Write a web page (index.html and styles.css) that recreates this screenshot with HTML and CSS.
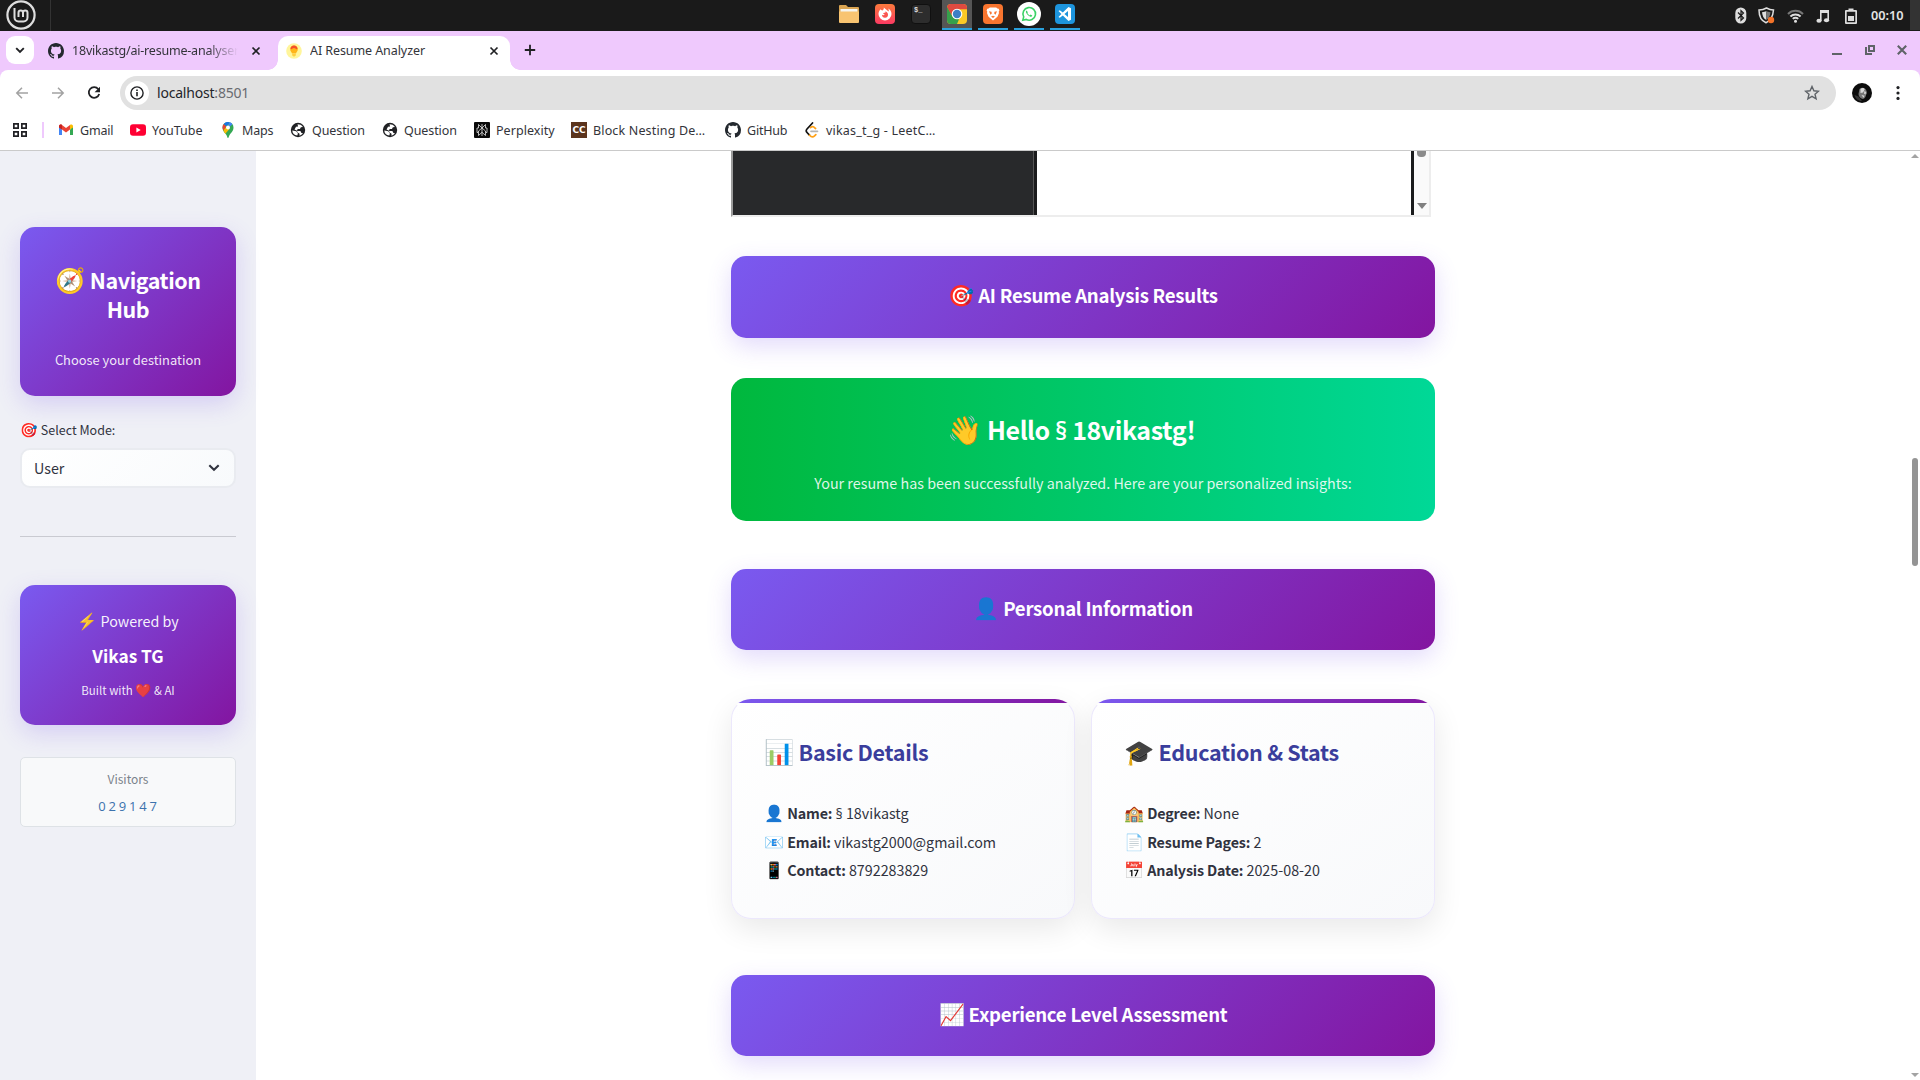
FILE: index.html
```html
<!DOCTYPE html>
<html lang="en">
<head>
<meta charset="utf-8">
<title>AI Resume Analyzer</title>
<link rel="stylesheet" href="styles.css">
</head>
<body>
<svg class="defs" width="0" height="0">
  <symbol id="github" viewBox="0 0 16 16"><path fill="#24292f" d="M8 0C3.58 0 0 3.58 0 8c0 3.54 2.29 6.53 5.47 7.59.4.07.55-.17.55-.38 0-.19-.01-.82-.01-1.49-2.01.37-2.53-.49-2.69-.94-.09-.23-.48-.94-.82-1.13-.28-.15-.68-.52-.01-.53.63-.01 1.08.58 1.23.82.72 1.21 1.87.87 2.33.66.07-.52.28-.87.51-1.07-1.78-.2-3.64-.89-3.64-3.95 0-.87.31-1.59.82-2.15-.08-.2-.36-1.02.08-2.12 0 0 .67-.21 2.2.82.64-.18 1.32-.27 2-.27.68 0 1.36.09 2 .27 1.53-1.04 2.2-.82 2.2-.82.44 1.1.16 1.92.08 2.12.51.56.82 1.27.82 2.15 0 3.07-1.87 3.75-3.65 3.95.29.25.54.73.54 1.48 0 1.07-.01 1.93-.01 2.2 0 .21.15.46.55.38A8.013 8.013 0 0016 8c0-4.42-3.58-8-8-8z"/></symbol>
  <symbol id="cross" viewBox="0 0 10 10"><path d="M1.5 1.5l7 7M8.5 1.5l-7 7" stroke="#202124" stroke-width="1.7" fill="none"/></symbol>
  <symbol id="globe" viewBox="0 0 16 16"><circle cx="8" cy="8" r="7.2" fill="#202124"/><path fill="#fff" d="M2.3 8.6l4 .7 1.600 2.100-.6 2.200C4.200 13.300 2.400 11.300 2.300 8.600zM7.500 2.300l3 .4c1 .5 1.900 1.300 2.400 2.300l-2 .2-1 1.700-2.300.2-.6 1.700 3.400.2 1 2 1.500.1c-.9 1.400-2 2.200-3.400 2.600l0-2-2.200-1.500-.2-1.500-2.600-1.200 1.500-2.800 2.100-.2z"/></symbol>
</svg>

<div class="panel">
  <div class="panel-menu">
    <svg width="30" height="30" viewBox="0 0 30 30" fill="none" stroke="#dedede"><circle cx="15" cy="15" r="13.600" stroke-width="2.200"/><path d="M8.500 8v9.500a4 4 0 0 0 4 4h5a4 4 0 0 0 4-4v-4.700a2.200 2.200 0 0 0-4.500 0v4.200m0-4.200a2.200 2.200 0 0 0-4.500 0v4.200" stroke-width="2"/></svg>
  </div>
  <div class="launchers">
    <div class="app"><svg width="20" height="20" viewBox="0 0 20 20"><path d="M0 3V2a1 1 0 0 1 1-1h6l2 2h10a1 1 0 0 1 1 1v5H0z" fill="#d9a452"/><path d="M1.500 5h17v5h-17z" fill="#f5f5f0"/><path d="M0 7.500h20v10.500a1 1 0 0 1-1 1H1a1 1 0 0 1-1-1z" fill="#f8c471"/></svg></div>
    <div class="app"><svg width="20" height="20" viewBox="0 0 20 20"><defs><linearGradient id="ff" x2="0" y2="1"><stop stop-color="#fb7a3c"/><stop offset="1" stop-color="#fb3a63"/></linearGradient></defs><rect width="20" height="20" rx="4" fill="url(#ff)"/><path d="M8.800 3.400c.2 1.600-.3 2.300-1.500 3.100C6.500 6.500 6 6 5.700 5.300 4.200 6.500 3.500 8.200 3.500 10a6.500 6.500 0 0 0 13 0c0-2.500-1.200-4.400-3.300-5.600.7 1.500.7 2.300.4 3.200-1-1.500-3-2.200-4.800-4.200z" fill="#fff"/><path d="M10.500 7.200c1.700.8 2.500 2 2.500 3.300a3 3 0 0 1-6 .3c.9.6 1.900.5 2.800-.2-1-.2-1.700-.7-1.500-1.500.5-.4 1.200-.3 1.900-.4.400-.4.400-1 .3-1.500z" fill="#fb5650"/></svg></div>
    <div class="app"><div class="terminal">$_</div></div>
    <div class="app open active"><svg width="20" height="20" viewBox="0 0 20 20"><defs><clipPath id="cc"><rect width="20" height="20" rx="4"/></clipPath></defs><g clip-path="url(#cc)"><rect width="20" height="20" fill="#fbc926"/><path d="M0 2l5.500 10.500 4.500 2.500 2 .2L10 20H0z" fill="#36a04b"/><path d="M0 0h20v5.200H10L5.500 12.500 0 3z" fill="#df4a40"/></g><circle cx="10" cy="10" r="5.300" fill="#fff"/><circle cx="10" cy="10" r="4.200" fill="#3c7fc6"/></svg></div>
    <div class="app open"><svg width="20" height="20" viewBox="0 0 20 20"><rect width="20" height="20" rx="4" fill="#f8752f"/><path d="M6.800 3.500h6.400l1.200 1.100 1.300.1.700 1.700-.7 1.300.3 1.300-1.400 3.500-1.600 1.500-3 2.600-3-2.600-1.600-1.500L4 9l.3-1.300-.7-1.300.7-1.700 1.300-.1z" fill="#fff"/><path d="M6 7.200l2.500.5.300 1.700-1.300 1.300zM14 7.200l-2.500.5-.3 1.700 1.300 1.300zM8 12.600l2-.8 2 .8-2 1.300z" fill="#f8752f"/></svg></div>
    <div class="app open"><svg width="24" height="24" viewBox="0 0 24 24"><circle cx="12" cy="12" r="12" fill="#fff"/><path d="M5.800 18.200l.9-3.300A6.300 6.300 0 1 1 9.200 17.400z" fill="none" stroke="#3bd266" stroke-width="1.600"/><path d="M9.600 8.600c-.8.600-.9 1.500-.3 2.500 1 1.900 2.300 3 4 3.600 1 .2 1.700-.3 2-1.200l-1.800-1-.8.900c-1.100-.5-1.900-1.300-2.400-2.300l.6-.8z" fill="#3bd266"/></svg></div>
    <div class="app open"><svg width="20" height="20" viewBox="0 0 20 20"><rect width="20" height="20" rx="4" fill="#1d94dc"/><path d="M13.500 3l2.500 1.200v11.600L13.500 17 7.800 11.500 4.800 13.800l-1.300-.8L6.400 10 3.500 7l1.300-.8 3 2.300zM13 6.900L9.400 10l3.600 3.100z" fill="#fff"/></svg></div>
  </div>
  <div class="tray">
    <svg width="12" height="17" viewBox="0 0 12 17"><rect x=".3" y=".5" width="11" height="16" rx="5.500" fill="#dedede"/><path d="M3 5.500l5.500 5.500L6 13.300V3.700L8.500 6 3 11.500" fill="none" stroke="#1a1a1a" stroke-width="1.200"/></svg>
    <svg width="17" height="17" viewBox="0 0 17 17"><path d="M8.500 1C6.500 2.200 4 3 1 3c0 6 1.500 10.500 7 12.800C13.500 13.500 15 9 15.500 3c-3 0-5-.8-7-2z" fill="none" stroke="#dedede" stroke-width="1.500"/><path d="M8.300 4v9C5.500 11.500 4.500 9 4 5.300 6 5 7 4.800 8.300 4z" fill="#dedede"/><path d="M8.300 4v9c2.700-1.500 3.700-4 4.200-7.700-2-.3-3-.5-4.200-1.300z" fill="#777"/><circle cx="13" cy="13" r="3.200" fill="#f37329"/></svg>
    <svg width="17" height="14" viewBox="0 0 17 14" fill="none"><path d="M1 5a10.500 10.500 0 0 1 15 0" stroke="#777" stroke-width="2"/><path d="M3.400 7.500a7.200 7.200 0 0 1 10.200 0M5.800 9.900a3.900 3.900 0 0 1 5.400 0" stroke="#dedede" stroke-width="2"/><circle cx="8.500" cy="12.200" r="1.500" fill="#dedede"/></svg>
    <svg width="14" height="14" viewBox="0 0 14 14"><path d="M4 1h9v10h-1.600V4H5.600v8H4z" fill="#dedede"/><ellipse cx="3" cy="11.800" rx="2.600" ry="2" fill="#dedede"/><ellipse cx="10.500" cy="11.200" rx="2.600" ry="2" fill="#dedede"/></svg>
    <svg width="12" height="16" viewBox="0 0 12 16"><path d="M3.500.5h5V2H11a1 1 0 0 1 1 1v12a1 1 0 0 1-1 1H1a1 1 0 0 1-1-1V3a1 1 0 0 1 1-1h2.500zM1.700 3.700v10.600h8.600V3.700z" fill="#dedede" fill-rule="evenodd"/><path d="M3 8h6v5H3z" fill="#dedede"/></svg>
    <span class="clock">00:10</span>
  </div>
  <div class="panel-corner"></div>
</div>

<div class="tabstrip">
  <div class="tab-search"><svg width="10" height="7" viewBox="0 0 10 7"><path d="M1.200 1.200L5 5l3.800-3.800" fill="none" stroke="#202124" stroke-width="1.900"/></svg></div>
  <div class="tab idle"><svg width="16" height="16"><use href="#github"/></svg><span class="tab-title faded">18vikastg/ai-resume-analyser</span><svg class="tab-close" width="10" height="10"><use href="#cross"/></svg></div>
  <div class="tab current"><svg width="16" height="16" viewBox="0 0 16 16"><circle cx="8" cy="8" r="7.800" fill="#fff59b"/><path d="M8 2.500a3.800 3.800 0 0 0-3.800 3.800C4.200 8.500 5.600 9 6 10.500h4c.4-1.500 1.800-2 1.800-4.200A3.800 3.800 0 0 0 8 2.500z" fill="#ffb418"/><path d="M8 2.500c-2 0-3.300 1.300-3.500 3.300 1.300 1.200 2-.8 3.500-.8s2.200 2 3.500.8C11.300 3.800 10 2.500 8 2.500z" fill="#f4502b"/><path d="M6.200 11h3.600v1.500L8 13.800l-1.800-1.300z" fill="#ffcf3f"/></svg><span class="tab-title">AI Resume Analyzer</span><svg class="tab-close" width="10" height="10"><use href="#cross"/></svg></div>
  <svg class="new-tab" width="12" height="12" viewBox="0 0 12 12"><path d="M6 .8v10.400M.8 6h10.400" stroke="#202124" stroke-width="1.800"/></svg>
  <div class="window-buttons">
    <svg width="10" height="10" viewBox="0 0 10 10"><path d="M0 8h10v2H0z" fill="#5f6368"/></svg>
    <svg width="10" height="10" viewBox="0 0 10 10" fill="none" stroke="#5f6368" stroke-width="2"><path d="M4 1h5v5H4zM1 2v7h6"/></svg>
    <svg width="10" height="10" viewBox="0 0 10 10"><path d="M.8.800l8.400 8.400M9.200.8L.8 9.200" stroke="#5f6368" stroke-width="2.100"/></svg>
  </div>
</div>

<div class="toolbar-wrap">
<div class="toolbar">
  <svg class="nav" width="14" height="12" viewBox="0 0 14 12" fill="none" stroke="#a2a2a2" stroke-width="1.500"><path d="M7 .8L1.800 6 7 11.200M2 6h11"/></svg>
  <svg class="nav" width="14" height="12" viewBox="0 0 14 12" fill="none" stroke="#a2a2a2" stroke-width="1.500"><path d="M7 .8L12.200 6 7 11.200M12 6H1"/></svg>
  <svg class="nav" width="14" height="14" viewBox="0 0 14 14"><path d="M11.300 3.200A5.300 5.300 0 1 0 12.200 8" fill="none" stroke="#202124" stroke-width="1.800"/><path d="M13 .8v5.400H7.600z" fill="#202124"/></svg>
  <div class="omnibox">
    <div class="info"><svg width="14" height="14" viewBox="0 0 14 14"><circle cx="7" cy="7" r="6.100" fill="none" stroke="#202124" stroke-width="1.400"/><path d="M6.200 6h1.600v4.300H6.200zM6.200 3.500h1.600v1.500H6.200z" fill="#202124"/></svg></div>
    <span class="url">localhost<span class="port">:8501</span></span>
    <svg class="star" width="16" height="16" viewBox="0 0 16 16"><path d="M8 1.500l1.900 4.300 4.600.4-3.500 3 1.100 4.600L8 11.400l-4.100 2.400L5 9.200l-3.500-3 4.600-.4z" fill="none" stroke="#5f6368" stroke-width="1.400"/></svg>
  </div>
  <svg class="avatar" width="20" height="20" viewBox="0 0 20 20"><circle cx="10" cy="10" r="10" fill="#0c0c0c"/><path d="M7.500 6c2.500-2.500 6.500-1.500 7.200 2.500.5 1.500 0 2.500-.5 3.100-.3 2-1.500 4.200-3.400 4.400C8 15.500 6.500 13 6.500 11z" fill="#777"/><path d="M8.500 6c1.500-1.500 4-1.200 4.200.6L11 9.500 8.500 10zM12.500 8l1.500 1-.5 2.500-1.500-1zM9.500 12l3 .8-1 2z" fill="#d8d8d8"/><path d="M2.500 12l4 1.500 3.500 4.500c-3.500.3-6.500-2-7.500-6z" fill="#333"/></svg>
  <svg class="kebab" width="4" height="14" viewBox="0 0 4 14" fill="#202124"><circle cx="2" cy="1.600" r="1.600"/><circle cx="2" cy="7" r="1.600"/><circle cx="2" cy="12.400" r="1.600"/></svg>
</div>
</div>

<div class="bookmarks">
  <svg class="apps-grid" width="14" height="14" viewBox="0 0 14 14" fill="none" stroke="#202124" stroke-width="1.700"><path d="M.85.850h4.300v4.300H.85zM8.850.850h4.300v4.300h-4.300zM.85 8.850h4.300v4.300H.85zM8.850 8.850h4.300v4.300h-4.300z"/></svg>
  <div class="divider"></div>
  <div class="bm gmail"><svg width="16" height="16" viewBox="0 0 16 16"><path d="M1 3.500V13h3V7.500z" fill="#4285f4"/><path d="M15 3.500V13h-3V7.500z" fill="#34a853"/><path d="M1 4.500C1 2.500 3 2 4 3l4 3 4-3v4.500L8 10.500 4 7.500 1 5.500z" fill="#ea4335"/><path d="M12 3c1-1 3-.5 3 1.500v1L12 7.500z" fill="#fbbc04"/><path d="M1 4.500C1 2.500 3 2 4 3v4.500l-3-2z" fill="#c5221f"/></svg><span>Gmail</span></div>
  <div class="bm youtube"><svg width="16" height="16" viewBox="0 0 16 16"><rect y="2.200" width="16" height="11.600" rx="3" fill="#f03"/><path d="M6.400 5.500v5l4.300-2.500z" fill="#fff"/></svg><span>YouTube</span></div>
  <div class="bm maps"><svg width="16" height="16" viewBox="0 0 16 16"><path d="M8 16c-.8 0-.7-1.400-1.600-2.900C5.300 11.200 2.500 9 2.500 5.500A5.500 5.500 0 0 1 8 0a5.500 5.500 0 0 1 5.500 5.500c0 3.500-2.800 5.700-3.900 7.600C8.700 14.600 8.800 16 8 16z" fill="#34a853"/><path d="M3.800 2L6.300 4.200 3.600 8.500A5.500 5.500 0 0 1 3.800 2z" fill="#ea4335"/><path d="M3.500 8.300L6.400 4.800l3.200 2-4.300 4.900C4.500 10.700 3.800 9.600 3.500 8.300z" fill="#fbbc04"/><path d="M3.800 2A5.500 5.500 0 0 1 9.700.300L6.400 4.200z" fill="#1a73e8"/><path d="M9.700.3c1.300.4 2 1 2.700 1.900L9.500 5 8 3z" fill="#4285f4"/><circle cx="8" cy="5.500" r="2" fill="#fff"/></svg><span>Maps</span></div>
  <div class="bm question"><svg width="16" height="16"><use href="#globe"/></svg><span>Question</span></div>
  <div class="bm question"><svg width="16" height="16"><use href="#globe"/></svg><span>Question</span></div>
  <div class="bm perplexity"><svg width="16" height="16" viewBox="0 0 16 16"><rect width="16" height="16" rx="1" fill="#0a0a0a"/><path d="M8 2v12M4.500 2.500L8 6l3.500-3.500V6h1.500v4.500h-1.500v3L8 10.300l-3.500 3.200v-3H3V6h1.500zM4.500 10.500V9L8 6l3.500 3v1.500" fill="none" stroke="#e4e4e4" stroke-width=".8"/></svg><span>Perplexity</span></div>
  <div class="bm chef"><div class="cc">CC</div><span>Block Nesting De…</span></div>
  <div class="bm gh"><svg width="16" height="16"><use href="#github"/></svg><span>GitHub</span></div>
  <div class="bm leet"><svg width="16" height="16" viewBox="0 0 16 16" fill="none" stroke-width="1.700" stroke-linecap="round"><path d="M6.500 5.700c1.600-1.500 3-1.300 4.300.1l.8.700" stroke="#ffa116"/><path d="M8.500 1L3 7c-1 1.100-1 2.400 0 3.500l2.500 2.700" stroke="#111"/><path d="M5.500 13.200c1.800 2 3.600 2 5.100.7l1.200-1.200" stroke="#ffa116"/><path d="M7 9.300h6.500" stroke="#b3b3b3"/></svg><span>vikas_t_g - LeetC…</span></div>
</div>

<div class="page">
  <aside class="sidebar">
    <div class="brand-card hub">
      <h2><span class="em">🧭</span> Navigation<br>Hub</h2>
      <p>Choose your destination</p>
    </div>
    <div class="select-label"><span class="em">🎯</span> Select Mode:</div>
    <div class="select"><span>User</span><svg width="12" height="8" viewBox="0 0 12 8"><path d="M1.300 1.300L6 5.800l4.700-4.500" fill="none" stroke="#31333f" stroke-width="2.100"/></svg></div>
    <div class="rule"></div>
    <div class="brand-card powered">
      <div class="by"><span class="em">⚡</span> Powered by</div>
      <div class="who">Vikas TG</div>
      <div class="built">Built with <span class="em">❤️</span> &amp; AI</div>
    </div>
    <div class="visitors"><div class="v-label">Visitors</div><div class="v-count">029147</div></div>
  </aside>

  <main class="main">
    <div class="content">
      <div class="pdf">
        <div class="pdf-dark"></div>
        <div class="pdf-edge"></div>
        <div class="pdf-page"></div>
        <div class="pdf-scroll"><div class="pdf-thumb"></div><div class="pdf-down"></div></div>
      </div>
      <div class="banner results"><h3><span class="em">🎯</span> AI Resume Analysis Results</h3></div>
      <div class="hello">
        <h2><span class="em">👋</span> Hello <span class="sect">§</span> 18vikastg!</h2>
        <p>Your resume has been successfully analyzed. Here are your personalized insights:</p>
      </div>
      <div class="banner personal"><h3><span class="em">👤</span> Personal Information</h3></div>
      <div class="cards">
        <section class="card">
          <h3><span class="em">📊</span> Basic Details</h3>
          <p><span class="em">👤</span> <b>Name:</b> <span class="sect">§</span> 18vikastg</p>
          <p><span class="em">📧</span> <b>Email:</b> vikastg2000@gmail.com</p>
          <p><span class="em">📱</span> <b>Contact:</b> 8792283829</p>
        </section>
        <section class="card">
          <h3><span class="em">🎓</span> Education &amp; Stats</h3>
          <p><span class="em">🏫</span> <b>Degree:</b> None</p>
          <p><span class="em">📄</span> <b>Resume Pages:</b> 2</p>
          <p><span class="em">📅</span> <b>Analysis Date:</b> 2025-08-20</p>
        </section>
      </div>
      <div class="banner level"><h3><span class="em">📈</span> Experience Level Assessment</h3></div>
    </div>
    <div class="scrollbar"><div class="sb-up"></div><div class="sb-thumb"></div><div class="sb-down"></div></div>
  </main>
</div>
</body>
</html>
```
FILE: styles.css
```css
* { box-sizing: border-box; }
body {
  margin: 0;
  width: 1920px;
  height: 1080px;
  overflow: hidden;
  display: flex;
  flex-direction: column;
  background: #fff;
  font-family: "Noto Sans", sans-serif;
  color: #31333f;
}
svg { display: block; flex: none; }
.defs { position: absolute; }
h2, h3, p { margin: 0; }
.em { font-size: 1.13em; line-height: 0; letter-spacing: 0; font-weight: 400; }
.sect { font-family: "Open Sans", sans-serif; font-size: .98em; line-height: 0; }

/* desktop panel */
.panel { flex: none; height: 31px; background: #1a1a1a; display: flex; justify-content: space-between; }
.panel-menu { width: 51px; padding-left: 6px; border-right: 1px solid #333; }
.launchers { display: flex; gap: 6px; margin-left: 783px; }
.app { width: 30px; height: 30px; padding-bottom: 3px; display: flex; align-items: center; justify-content: center; }
.open { border-bottom: 2px solid #29a0dc; padding-bottom: 1px; }
.active { background: #555; }
.terminal { width: 20px; height: 20px; border: 1px solid #101010; border-radius: 4px; background: #2d2d2d; color: #ddd; font: bold 7px/10px "Liberation Mono", monospace; padding-left: 2px; }
.tray { margin-left: auto; display: flex; align-items: center; padding-right: 5px; }
.tray svg:nth-child(1) { margin-right: 11px; }
.tray svg:nth-child(2) { margin-right: 12px; }
.tray svg:nth-child(3) { margin-right: 12px; }
.tray svg:nth-child(4) { margin-right: 15px; }
.tray svg:nth-child(5) { margin-right: 14px; }
.clock { width: 34px; color: #e4e4e4; font-size: 12.700px; font-weight: 600; line-height: 31px; white-space: nowrap; }
.panel-corner { width: 10px; background: #333; height: 30px; }

/* browser tabs */
.tabstrip { flex: none; height: 39px; background: #efc9fd; display: flex; align-items: flex-start; padding: 5px 13px 0 6px; }
.tab-search { width: 28px; height: 28px; border-radius: 9px; background: #fff; display: flex; align-items: center; justify-content: center; margin-right: 5px; }
.tab { height: 34px; display: flex; align-items: center; padding-bottom: 5px; font-size: 12.500px; color: #33343a; white-space: nowrap; }
.idle { width: 239px; padding-left: 9px; }
.current { width: 232px; padding-left: 8px; background: #fff; border-radius: 10px 10px 0 0; position: relative; }
.current::before, .current::after { content: ""; position: absolute; bottom: 0; width: 10px; height: 10px; }
.current::before { left: -10px; background: radial-gradient(circle at 0 0, transparent 9.500px, #fff 10px); }
.current::after { right: -10px; background: radial-gradient(circle at 100% 0, transparent 9.500px, #fff 10px); }
.tab-title { width: 166px; margin: 0 13px 0 8px; overflow: hidden; letter-spacing: -.2px; }
.current .tab-title { letter-spacing: -.08px; }
.faded { -webkit-mask-image: linear-gradient(90deg, #000 82%, transparent); mask-image: linear-gradient(90deg, #000 82%, transparent); }
.new-tab { margin: 8px 0 0 14px; }
.window-buttons { margin-left: auto; display: flex; gap: 22.500px; padding-top: 9px; }

/* address bar */
.toolbar-wrap { flex: none; background: #efc9fd; }
.toolbar { height: 40px; background: #fff; border-radius: 8px 8px 0 0; display: flex; align-items: center; padding: 6px 20px 0 15px; }
.nav { margin-right: 22px; }
.nav:nth-child(3) { margin-right: 19px; }
.omnibox { flex: 1; height: 34px; border-radius: 17px; background: #e1e1e1; display: flex; align-items: center; padding: 0 16px 0 5px; }
.info { width: 24px; height: 24px; border-radius: 50%; background: #fff; display: flex; align-items: center; justify-content: center; }
.url { margin-left: 8px; padding-bottom: 2px; font-size: 14px; letter-spacing: -.2px; color: #24252a; }
.port { color: #696b70; }
.star { margin-left: auto; }
.avatar { margin: 0 24px 0 16px; }

/* bookmarks */
.bookmarks { flex: none; height: 41px; border-bottom: 1px solid #cacaca; display: flex; align-items: center; padding-left: 13px; font-size: 12.500px; letter-spacing: -.2px; color: #33343a; }
.divider { width: 2px; height: 16px; background: #efc9fd; margin: 0 14px 0 15px; }
.bm { display: flex; align-items: center; gap: 6px; white-space: nowrap; }
.gmail { width: 72px; } .youtube { width: 90px; letter-spacing: 0; } .maps { width: 70px; } .question { width: 92px; letter-spacing: -.1px; }
.perplexity { width: 97px; letter-spacing: .05px; } .chef { width: 154px; letter-spacing: .15px; } .gh { width: 79px; } .leet { letter-spacing: .2px; }
.cc { width: 16px; height: 16px; background: #5b341d; color: #fff; font: bold 9px/16px "DejaVu Sans", sans-serif; text-align: center; letter-spacing: 0; }

/* page */
.page { flex: 1; min-height: 0; display: flex; font-family: "Noto Sans CJK SC", sans-serif; }
.sidebar { width: 256px; flex: none; background: #eff0f6; padding: 76px 20px 0; }
.brand-card { border-radius: 15px; background: linear-gradient(135deg, #7a5af0 0%, #8315a0 100%); color: #fff; text-align: center; box-shadow: 0 8px 25px rgba(108, 71, 235, .2); }
.hub { height: 169px; padding-top: 38px; }
.hub h2 { font-size: 21.500px; line-height: 29px; font-weight: 600; letter-spacing: -.45px; }
.hub p { margin-top: 26px; font-size: 12.900px; line-height: 22px; color: rgba(255,255,255,.9); }
.select-label { margin-top: 23px; font-size: 12.500px; line-height: 22px; }
.select { margin-top: 7px; height: 40px; border: 2px solid #e9ebf0; border-radius: 10px; background: linear-gradient(135deg, #fff, #f8fafc); display: flex; align-items: center; justify-content: space-between; padding: 0 14px 0 12px; font-size: 14.300px; }
.select span { padding-bottom: 2px; }
.rule { height: 1px; background: #c9cad1; margin: 48px 0; }
.powered { height: 140px; padding-top: 23px; }
.by { font-size: 14.300px; line-height: 26px; color: rgba(255,255,255,.94); }
.who { font-size: 17.300px; line-height: 30px; margin-top: 7px; font-weight: 700; }
.built { font-size: 11.500px; line-height: 22px; margin-top: 8px; color: rgba(255,255,255,.9); }
.visitors { margin-top: 32px; height: 70px; border: 1px solid #dee2e6; border-radius: 5px; background: #f8f9fa; text-align: center; padding-top: 10px; }
.v-label { font-size: 12px; line-height: 22px; color: #7a828a; }
.v-count { font: 13px/20px "Open Sans", sans-serif; color: #3c72ad; letter-spacing: 2.800px; margin-top: 6px; padding-left: 2px; }

.main { flex: 1; display: flex; }
.content { width: 704px; margin-left: 475px; flex: none; }
.pdf { width: 700px; height: 66px; border: solid #ededed; border-width: 0 2px 2px; border-left-color: #9b9b9b; display: flex; }
.pdf-dark { width: 301px; background: #28292b; border-right: 1px solid #555; }
.pdf-edge { width: 3px; background: #1a1b1c; }
.pdf-page { flex: 1; border-right: 3px solid #1a1b1c; }
.pdf-scroll { width: 15px; background: #fafafa; display: flex; flex-direction: column; justify-content: space-between; align-items: center; padding-bottom: 6px; }
.pdf-thumb { width: 9px; height: 6px; border-radius: 0 0 4px 4px; background: #8b8b8b; }
.pdf-down { border: 5px solid transparent; border-top: 6px solid #808080; border-bottom: 0; }
.banner { height: 81px; border-radius: 15px; background: linear-gradient(135deg, #7a5af0 0%, #8315a0 100%); box-shadow: 0 8px 25px rgba(108, 71, 235, .2); color: #fff; text-align: center; }
.banner h3 { font-size: 18.600px; line-height: 28px; font-weight: 600; padding-top: 25px; letter-spacing: -.25px; }
.results { margin-top: 39px; height: 82px; }
.hello { margin-top: 40px; height: 143px; border-radius: 15px; background: linear-gradient(90deg, #00b83d, #00d897); color: #fff; text-align: center; padding-top: 33px; }
.hello h2 { font-size: 25px; line-height: 36px; font-weight: 600; letter-spacing: -.42px; padding-right: 24px; }
.hello p { margin-top: 23px; font-size: 14.330px; line-height: 26px; color: rgba(255,255,255,.88); }
.personal { margin-top: 48px; }
.cards { display: flex; gap: 16px; margin-top: 49px; }
.card { width: 344px; height: 220px; border: 1px solid #ece8fc; border-top-color: transparent; border-radius: 20px; background: linear-gradient(90deg, #7a5af0, #8315a0) 0 0 / 100% 4px no-repeat border-box, linear-gradient(145deg, #fff, #f8f9fb) border-box; box-shadow: 0 10px 30px rgba(0,0,0,.09); padding: 35px 32px 0; }
.card h3 { color: #3a3d9c; font-size: 21.500px; line-height: 34px; font-weight: 600; margin-bottom: 30px; letter-spacing: -.3px; }
.card p { font-size: 14.300px; line-height: 28.500px; white-space: nowrap; }
.card b { font-weight: 600; letter-spacing: -.16px; }
.level { margin-top: 56px; }

.scrollbar { margin-left: auto; width: 9px; display: flex; flex-direction: column; align-items: center; padding: 3px 1px 3px 0; }
.sb-up { border: 4px solid transparent; border-bottom: 4px solid #a3a3a3; border-top: 0; }
.sb-thumb { width: 6px; height: 108px; border-radius: 4px; background: #949494; margin-top: 300px; }
.sb-down { margin-top: auto; border: 4px solid transparent; border-top: 4px solid #a3a3a3; border-bottom: 0; }
```
